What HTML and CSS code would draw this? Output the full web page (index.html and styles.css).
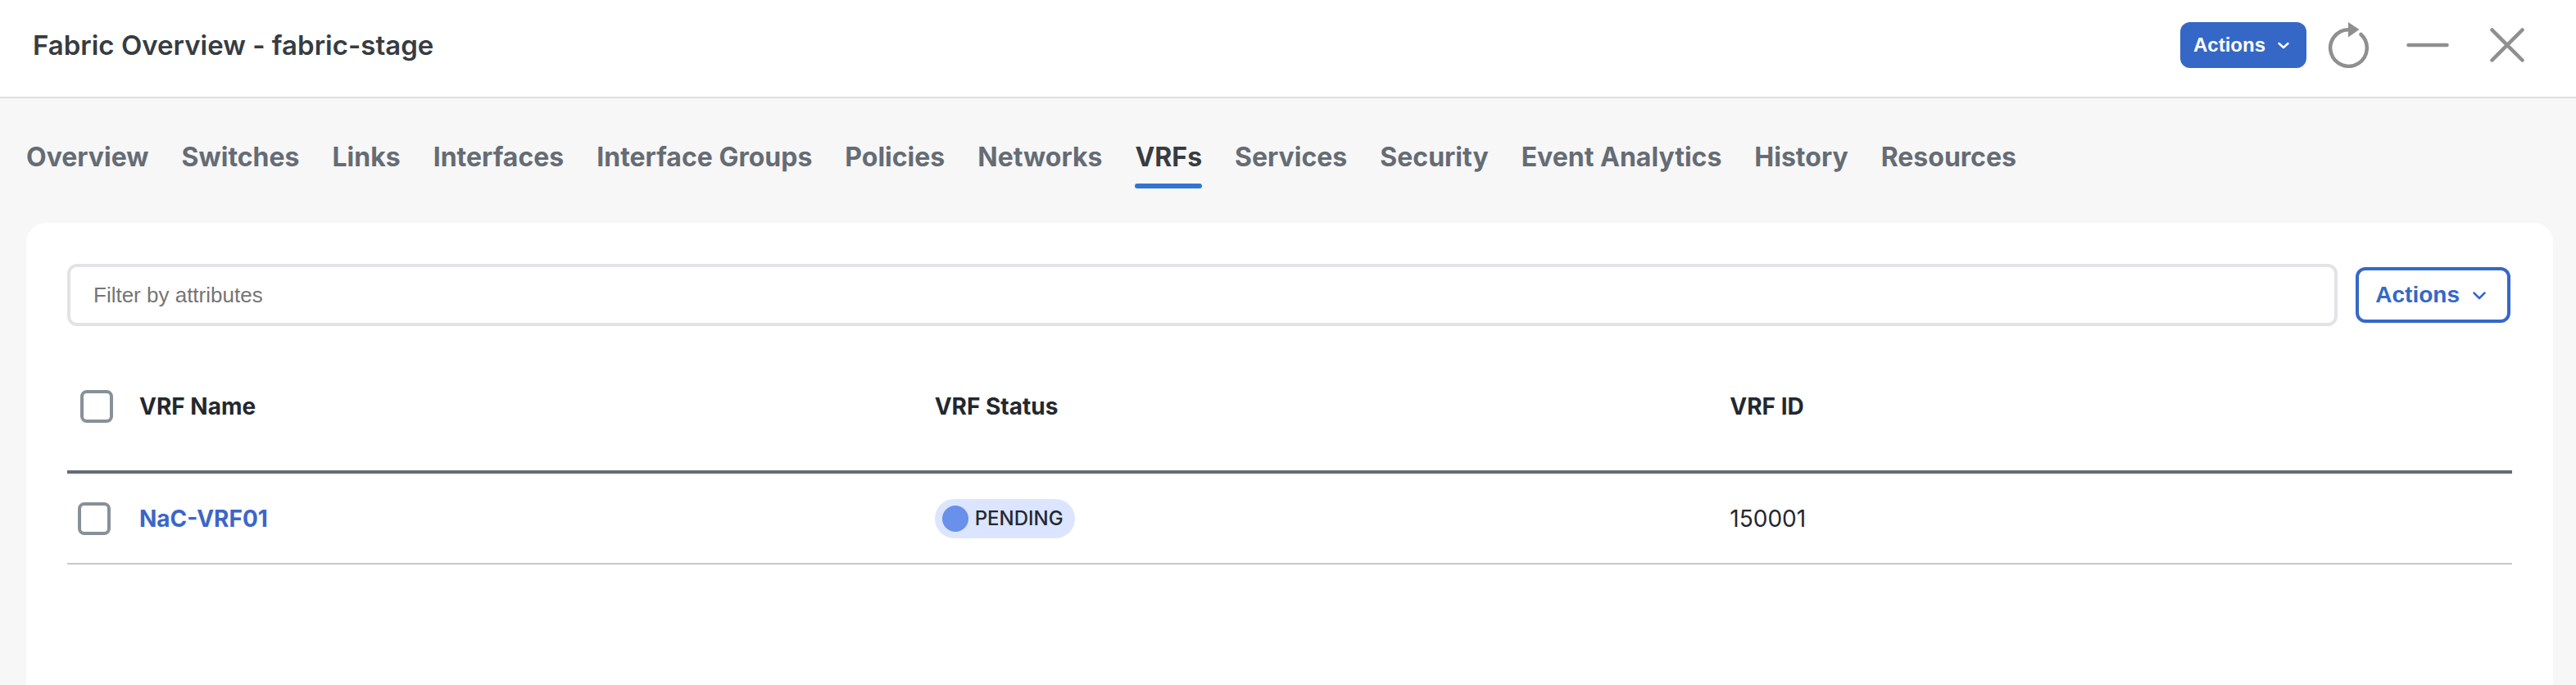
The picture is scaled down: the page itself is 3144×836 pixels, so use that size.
FILE: index.html
```html
<!DOCTYPE html>
<html lang="en">
<head>
<meta charset="utf-8">
<title>Fabric Overview - fabric-stage</title>
<link rel="stylesheet" href="styles.css">
</head>
<body>
<header class="topbar">
  <h1 class="title">Fabric Overview - fabric-stage</h1>
  <div class="tools">
    <button class="btn btn-primary" type="button">Actions
      <svg class="chevron" viewBox="0 0 16 16" aria-hidden="true"><path d="M2.500 6L8 11l5.500-5"/></svg>
    </button>
    <button class="icon-btn" type="button" aria-label="Refresh">
      <svg class="icon" viewBox="0 0 56 56" aria-hidden="true"><path class="line" d="M43.5 15A22.3 22.3 0 1 1 28 9.200"/><path class="solid" d="M28 0l13.500 9L28 18.500z"/></svg>
    </button>
    <button class="icon-btn" type="button" aria-label="Minimize">
      <svg class="icon" viewBox="0 0 56 56" aria-hidden="true"><path class="line" d="M4.500 28h47"/></svg>
    </button>
    <button class="icon-btn" type="button" aria-label="Close">
      <svg class="icon" viewBox="0 0 56 56" aria-hidden="true"><path class="line" d="M9.500 9.500l37 37M46.500 9.500l-37 37"/></svg>
    </button>
  </div>
</header>
<nav class="tabs" aria-label="Fabric sections">
  <a class="tab" href="#overview">Overview</a>
  <a class="tab" href="#switches">Switches</a>
  <a class="tab" href="#links">Links</a>
  <a class="tab" href="#interfaces">Interfaces</a>
  <a class="tab" href="#interface-groups">Interface Groups</a>
  <a class="tab" href="#policies">Policies</a>
  <a class="tab" href="#networks">Networks</a>
  <a class="tab tab-active" href="#vrfs" aria-current="page">VRFs</a>
  <a class="tab" href="#services">Services</a>
  <a class="tab" href="#security">Security</a>
  <a class="tab" href="#event-analytics">Event Analytics</a>
  <a class="tab" href="#history">History</a>
  <a class="tab" href="#resources">Resources</a>
</nav>
<main class="card">
  <div class="filter-row">
    <input class="filter" type="text" placeholder="Filter by attributes" aria-label="Filter by attributes">
    <button class="btn btn-outline" type="button">Actions
      <svg class="chevron" viewBox="0 0 16 16" aria-hidden="true"><path d="M1.500 5.500L8 12l6.500-6.500"/></svg>
    </button>
  </div>
  <table class="grid">
    <thead>
      <tr>
        <th class="col-check"><input class="check" type="checkbox" aria-label="Select all VRFs"></th>
        <th scope="col">VRF Name</th>
        <th scope="col">VRF Status</th>
        <th scope="col">VRF ID</th>
      </tr>
    </thead>
    <tbody>
      <tr>
        <td class="col-check"><input class="check" type="checkbox" aria-label="Select NaC-VRF01"></td>
        <td><a class="vrf-link" href="#nac-vrf01">NaC-VRF01</a></td>
        <td><span class="badge"><span class="dot"></span>PENDING</span></td>
        <td>150001</td>
      </tr>
    </tbody>
  </table>
</main>
</body>
</html>
```
FILE: styles.css
```css
* {
  box-sizing: border-box;
}

body {
  margin: 0;
  min-height: 100vh;
  display: flex;
  flex-direction: column;
  background: #f7f7f7;
  color: #23282e;
  font-family: Inter, "Liberation Sans", sans-serif;
  font-size: 28px;
}

.topbar {
  display: flex;
  align-items: center;
  justify-content: space-between;
  height: 120px;
  padding: 0 56px 8px 40px;
  background: #fff;
  border-bottom: 2px solid #dfdfdf;
}

.title {
  margin: 0;
  font-size: 33px;
  font-weight: 600;
  line-height: 40px;
  color: #373c42;
}

.tools {
  display: flex;
  align-items: center;
  gap: 41px;
}

.btn {
  display: flex;
  align-items: center;
  font-family: "Liberation Sans", Arial, sans-serif;
  font-weight: 700;
  border-radius: 12px;
}

.btn-primary {
  gap: 14px;
  height: 56px;
  margin-right: -18px;
  padding: 0 20px 0 16px;
  border: 0;
  background: #3568c6;
  color: #fff;
  font-size: 24px;
}

.btn-outline {
  gap: 16px;
  height: 68px;
  margin-right: 2px;
  padding: 0 26px 0 20px;
  border: 4px solid #3568c6;
  background: #fff;
  color: #3568c6;
  font-size: 28px;
}

.chevron {
  width: 16px;
  height: 16px;
  fill: none;
  stroke: currentColor;
  stroke-width: 2.5;
  stroke-linecap: round;
  stroke-linejoin: round;
}

.icon-btn {
  padding: 0;
  border: 0;
  background: none;
}

.icon {
  display: block;
  width: 56px;
  height: 56px;
}

.line {
  fill: none;
  stroke: #8f8f8f;
  stroke-width: 4.5;
  stroke-linecap: round;
}

.solid {
  fill: #8f8f8f;
}

.tabs {
  display: flex;
  gap: 40px;
  padding: 48px 32px 42px;
}

.tab {
  padding: 4px 0 12px;
  border-bottom: 6px solid transparent;
  color: #656c75;
  font-size: 32px;
  font-weight: 700;
  line-height: 40px;
  text-decoration: none;
  white-space: nowrap;
}

.tab-active {
  position: relative;
  color: #373c42;
}

.tab-active::after {
  content: "";
  position: absolute;
  inset: auto 0 -6px;
  height: 6px;
  border-radius: 3px;
  background: #3374d0;
}

.card {
  flex: 1;
  margin: 0 28px 0 32px;
  padding: 50px;
  background: #fff;
  border-radius: 24px 24px 0 0;
}

.filter-row {
  display: flex;
  align-items: center;
  gap: 22px;
}

.filter {
  flex: 1;
  min-width: 0;
  height: 76px;
  padding: 0 28px;
  border: 4px solid #e2e3e7;
  border-radius: 12px;
  font-family: "Liberation Sans", Arial, sans-serif;
  font-size: 26px;
}

.filter::placeholder {
  color: #757575;
}

.grid {
  width: 100%;
  margin-top: 20px;
  border-collapse: separate;
  border-spacing: 0;
  table-layout: fixed;
}

.grid th,
.grid td {
  padding: 0 0 0 16px;
  text-align: left;
  vertical-align: middle;
}

.grid th {
  height: 160px;
  border-bottom: 4px solid #656c75;
  font-weight: 700;
}

.grid td {
  height: 111px;
  padding-bottom: 2px;
  border-top: 2px solid #f3f3f4;
  border-bottom: 2px solid #c9c9c9;
}

.grid .col-check {
  width: 72px;
}

.grid td.col-check {
  padding-left: 13px;
}

.check {
  appearance: none;
  display: block;
  width: 40px;
  height: 40px;
  margin: 0;
  border: 4px solid #889099;
  border-radius: 8px;
  background: #fff;
}

.vrf-link {
  color: #3b66c8;
  font-weight: 700;
  text-decoration: none;
}

.badge {
  display: inline-flex;
  align-items: center;
  gap: 8px;
  height: 48px;
  padding: 0 14px 0 9px;
  border-radius: 24px;
  background: #dbe5ff;
  font-size: 24px;
  font-weight: 500;
  vertical-align: middle;
}

.dot {
  width: 32px;
  height: 32px;
  border-radius: 50%;
  background: #6990ea;
}
```
